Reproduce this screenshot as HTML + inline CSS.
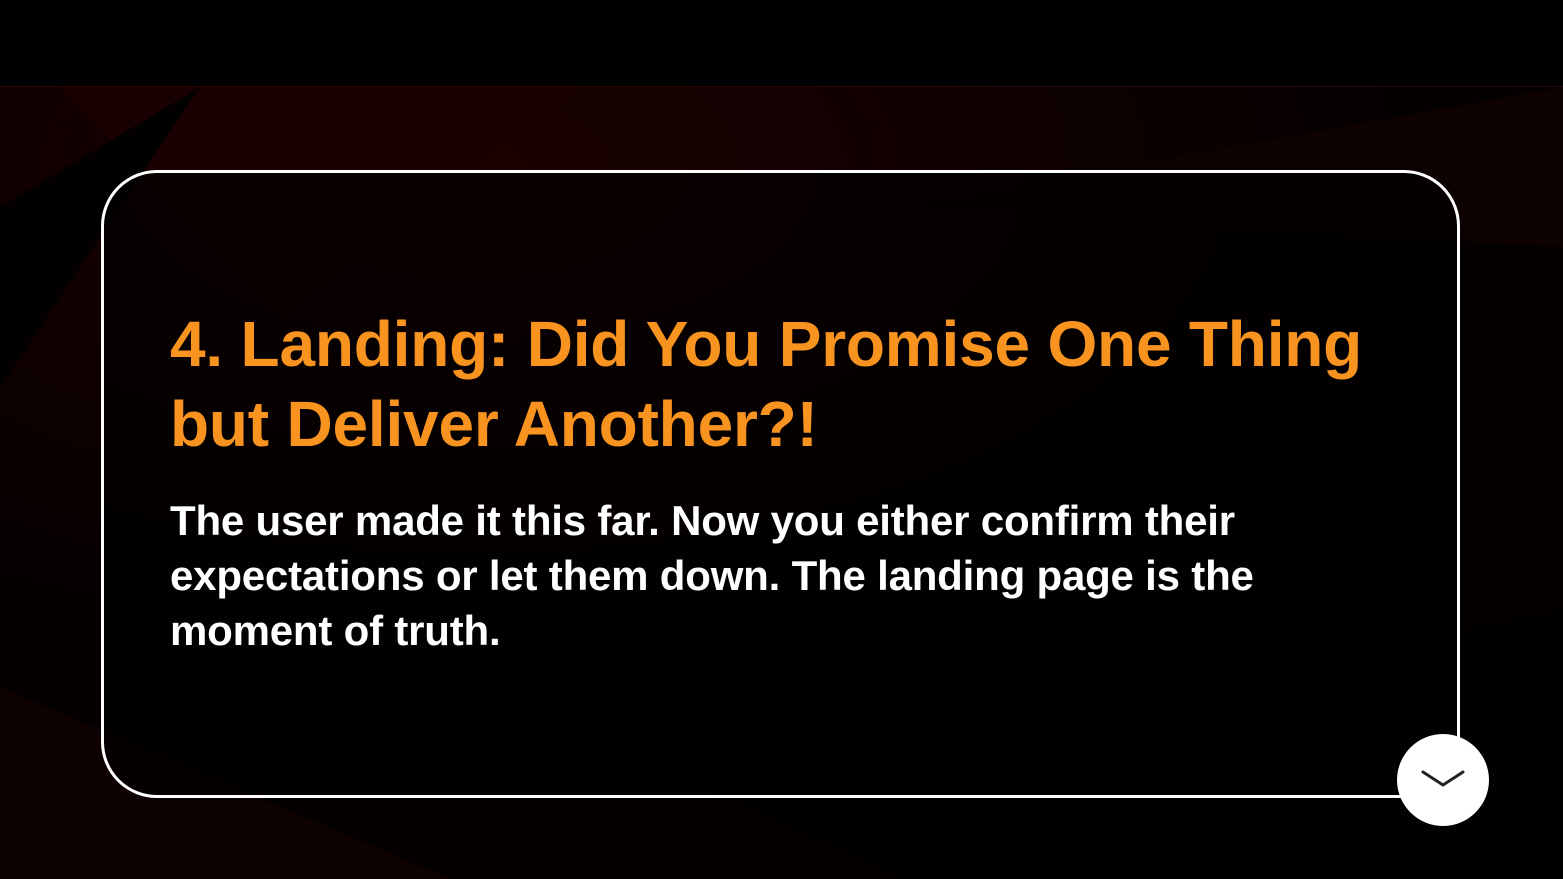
<!DOCTYPE html>
<html><head><meta charset="utf-8"><style>
html,body{margin:0;padding:0;width:1563px;height:879px;overflow:hidden;background:#000;font-family:"Liberation Sans",sans-serif}
.bg{position:absolute;left:0;top:87px;width:1563px;height:792px;background:#050000;overflow:hidden}
.s{position:absolute}
.top{position:absolute;left:0;top:0;width:1563px;height:86px;background:#000;border-bottom:1px solid #2a0505}
.card{position:absolute;left:101px;top:170px;width:1353px;height:622px;border:3px solid #fff;border-radius:56px;box-sizing:content-box;background:rgba(0,0,0,0.6)}
h1{position:absolute;left:170px;top:304px;margin:0;color:#f7931e;font-size:64px;line-height:80px;font-weight:bold;letter-spacing:-0.2px;white-space:nowrap}
p{position:absolute;left:170px;top:493px;margin:0;color:#fff;font-size:42px;line-height:55px;font-weight:bold;letter-spacing:-0.2px;white-space:nowrap}
.btn{position:absolute;left:1397px;top:734px;width:92px;height:92px;border-radius:50%;background:#fff}
</style></head><body>
<div class="top"></div>
<div class="bg">
<svg width="1563" height="792" class="s" style="left:0;top:0">
<defs>
<radialGradient id="g1" cx="0.3" cy="0.1" r="0.6"><stop offset="0" stop-color="#1c0101"/><stop offset="1" stop-color="#050000"/></radialGradient>
</defs>
<rect width="1563" height="792" fill="url(#g1)"/>
<polygon points="60,0 580,0 280,230" fill="#1a0101"/>
<polygon points="0,120 200,0 0,300" fill="#030000"/>
<polygon points="900,120 1563,0 1563,160" fill="#0e0101"/>
<polygon points="700,700 1563,520 1563,792 900,792" fill="#030000"/>
<polygon points="0,600 450,792 0,792" fill="#0e0101"/>
</svg>
</div>
<div class="card"></div>
<h1>4. Landing: Did You Promise One Thing<br>but Deliver Another?!</h1>
<p>The user made it this far. Now you either confirm their<br>expectations or let them down. The landing page is the<br>moment of truth.</p>
<div class="btn"><svg width="92" height="92" viewBox="0 0 92 92"><path d="M26 38 L46 51 L66 38" fill="none" stroke="#222" stroke-width="3" stroke-linecap="round" stroke-linejoin="round"/></svg></div>
</body></html>
